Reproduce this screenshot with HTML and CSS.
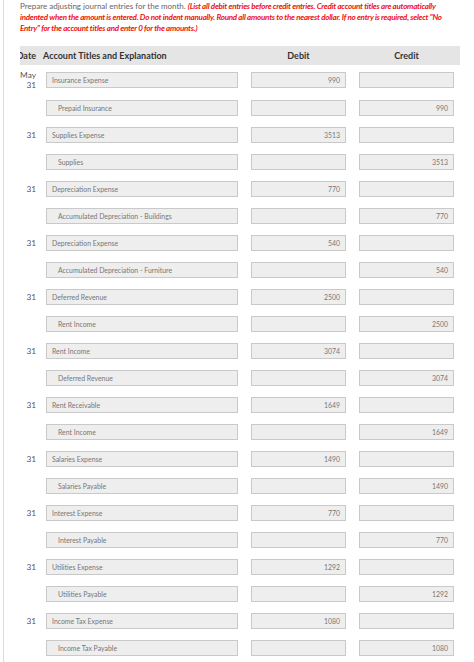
FILE: index.html
```html
<!DOCTYPE html>
<html>
<head>
<meta charset="utf-8">
<link rel="stylesheet" href="styles.css">
</head>
<body>
<div class="page">
  <p class="intro">Prepare adjusting journal entries for the month. <span class="warn">(List all debit entries before credit entries. Credit account titles are automatically indented when the amount is entered. Do not indent manually. Round all amounts to the nearest dollar. If no entry is required, select "No Entry" for the account titles and enter 0 for the amounts.)</span></p>
  <div class="journal">
    <div class="head">
      <div class="h-date"><span>Date</span></div>
      <div class="h-acct">Account Titles and Explanation</div>
      <div class="h-amt">Debit</div>
      <div class="h-amt">Credit</div>
    </div>

    <div class="row first">
      <div class="date">May<br>31</div>
      <div class="box acct">Insurance Expense</div>
      <div class="box amt">990</div>
      <div class="box amt"></div>
    </div>
    <div class="row">
      <div class="date"></div>
      <div class="box acct indent">Prepaid Insurance</div>
      <div class="box amt"></div>
      <div class="box amt">990</div>
    </div>

    <div class="row">
      <div class="date">31</div>
      <div class="box acct">Supplies Expense</div>
      <div class="box amt">3513</div>
      <div class="box amt"></div>
    </div>
    <div class="row">
      <div class="date"></div>
      <div class="box acct indent">Supplies</div>
      <div class="box amt"></div>
      <div class="box amt">3513</div>
    </div>

    <div class="row">
      <div class="date">31</div>
      <div class="box acct">Depreciation Expense</div>
      <div class="box amt">770</div>
      <div class="box amt"></div>
    </div>
    <div class="row">
      <div class="date"></div>
      <div class="box acct indent">Accumulated Depreciation - Buildings</div>
      <div class="box amt"></div>
      <div class="box amt">770</div>
    </div>

    <div class="row">
      <div class="date">31</div>
      <div class="box acct">Depreciation Expense</div>
      <div class="box amt">540</div>
      <div class="box amt"></div>
    </div>
    <div class="row">
      <div class="date"></div>
      <div class="box acct indent">Accumulated Depreciation - Furniture</div>
      <div class="box amt"></div>
      <div class="box amt">540</div>
    </div>

    <div class="row">
      <div class="date">31</div>
      <div class="box acct">Deferred Revenue</div>
      <div class="box amt">2500</div>
      <div class="box amt"></div>
    </div>
    <div class="row">
      <div class="date"></div>
      <div class="box acct indent">Rent Income</div>
      <div class="box amt"></div>
      <div class="box amt">2500</div>
    </div>

    <div class="row">
      <div class="date">31</div>
      <div class="box acct">Rent Income</div>
      <div class="box amt">3074</div>
      <div class="box amt"></div>
    </div>
    <div class="row">
      <div class="date"></div>
      <div class="box acct indent">Deferred Revenue</div>
      <div class="box amt"></div>
      <div class="box amt">3074</div>
    </div>

    <div class="row">
      <div class="date">31</div>
      <div class="box acct">Rent Receivable</div>
      <div class="box amt">1649</div>
      <div class="box amt"></div>
    </div>
    <div class="row">
      <div class="date"></div>
      <div class="box acct indent">Rent Income</div>
      <div class="box amt"></div>
      <div class="box amt">1649</div>
    </div>

    <div class="row">
      <div class="date">31</div>
      <div class="box acct">Salaries Expense</div>
      <div class="box amt">1490</div>
      <div class="box amt"></div>
    </div>
    <div class="row">
      <div class="date"></div>
      <div class="box acct indent">Salaries Payable</div>
      <div class="box amt"></div>
      <div class="box amt">1490</div>
    </div>

    <div class="row">
      <div class="date">31</div>
      <div class="box acct">Interest Expense</div>
      <div class="box amt">770</div>
      <div class="box amt"></div>
    </div>
    <div class="row">
      <div class="date"></div>
      <div class="box acct indent">Interest Payable</div>
      <div class="box amt"></div>
      <div class="box amt">770</div>
    </div>

    <div class="row">
      <div class="date">31</div>
      <div class="box acct">Utilities Expense</div>
      <div class="box amt">1292</div>
      <div class="box amt"></div>
    </div>
    <div class="row">
      <div class="date"></div>
      <div class="box acct indent">Utilities Payable</div>
      <div class="box amt"></div>
      <div class="box amt">1292</div>
    </div>

    <div class="row">
      <div class="date">31</div>
      <div class="box acct">Income Tax Expense</div>
      <div class="box amt">1080</div>
      <div class="box amt"></div>
    </div>
    <div class="row">
      <div class="date"></div>
      <div class="box acct indent">Income Tax Payable</div>
      <div class="box amt"></div>
      <div class="box amt">1080</div>
    </div>
  </div>
</div>
</body>
</html>
```

FILE: styles.css
```css
html, body {
  margin: 0;
  padding: 0;
  background: #ffffff;
}

body {
  font-family: Lato, "Noto Sans", sans-serif;
  color: #444;
  overflow: hidden;
}

.page {
  margin-left: 3px;
  border-left: 1px solid #dcdcdc;
  padding-left: 16px;
  min-height: 662px;
  box-sizing: border-box;
}

.intro {
  margin: 0;
  padding-top: 1px;
  width: 434px;
  height: 34px;
  font-size: 8px;
  line-height: 11px;
  color: #666;
}

.warn {
  color: #ee1111;
  font-weight: bold;
  font-style: italic;
  letter-spacing: -0.25px;
}

.journal {
  margin-top: 11px;
  width: 440px;
}

.head,
.row {
  display: grid;
  grid-template-columns: 26px 192px 108px 108px;
  align-items: center;
}

.head {
  height: 19px;
  background: #e5e5e5;
  font-weight: bold;
  font-size: 9px;
  color: #333;
}

.h-date {
  display: flex;
  justify-content: flex-end;
  overflow: hidden;
  white-space: nowrap;
  padding-right: 10px;
  box-sizing: border-box;
}

.h-acct {
  white-space: nowrap;
  margin-left: -3px;
}

.h-amt {
  text-align: center;
  margin-left: 13px;
}

.row {
  padding: 5px 0 6px;
}

.row.first {
  padding: 5px 0;
}

.date {
  text-align: right;
  padding-right: 10px;
  font-size: 8.3px;
  line-height: 10px;
  color: #555;
}

.box {
  box-sizing: border-box;
  height: 16px;
  border: 1px solid #c9c9c9;
  background: #eeeeee;
  font-size: 6.9px;
  line-height: 14px;
  color: #777;
  white-space: nowrap;
  overflow: hidden;
}

.acct {
  padding-left: 5px;
}

.acct.indent {
  padding-left: 11px;
}

.amt {
  margin-left: 13px;
  text-align: right;
  padding-right: 5px;
}
```
